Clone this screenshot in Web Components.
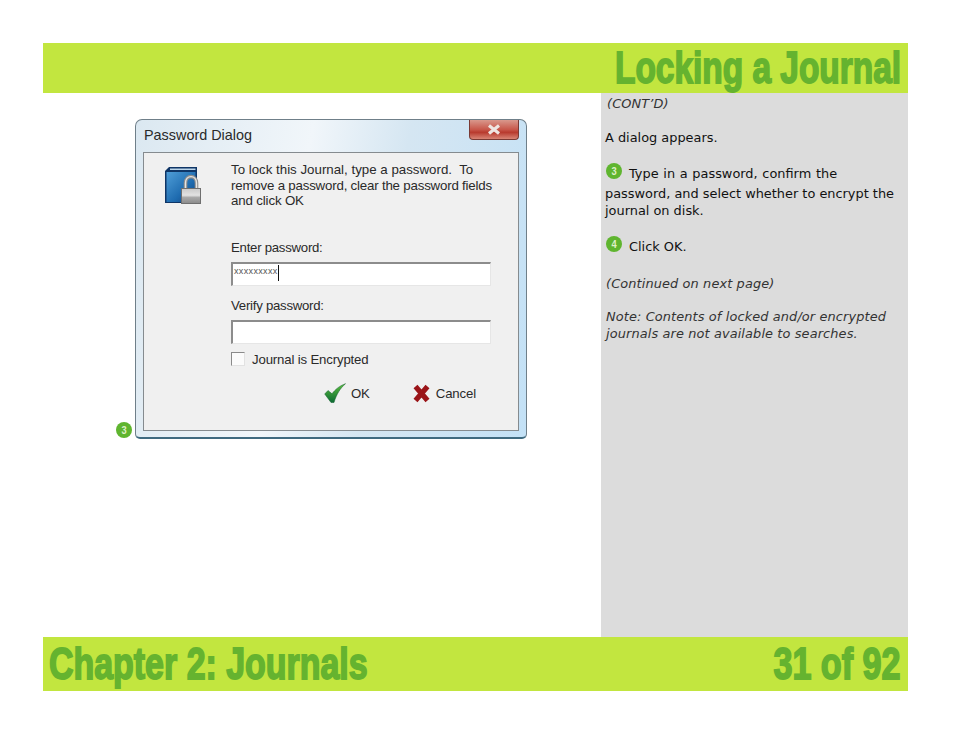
<!doctype html>
<html>
<head>
<meta charset="utf-8">
<title>Locking a Journal</title>
<style>
  html, body { margin: 0; background: #ffffff; }
</style>
</head>
<body>
<slide-page>
  <slide-band slot="header" height="50"><band-title side="end" squeeze="0.743">Locking a Journal</band-title></slide-band>
  <dialog-area slot="main">
    <step-badge num="3" class="callout"></step-badge>
    <password-dialog></password-dialog>
  </dialog-area>
  <side-notes slot="side">
    <p class="em first">(CONT’D)</p>
    <p class="intro">A dialog appears.</p>
    <p class="step3"><step-badge num="3"></step-badge><span style="word-spacing:0.6px">Type in a password, confirm the</span><br><span>password, and select whether to encrypt the journal on disk.</span></p>
    <p class="step4"><step-badge num="4"></step-badge><span>Click OK.</span></p>
    <p class="em cont">(Continued on next page)</p>
    <p class="em note">Note: Contents of locked and/or encrypted journals are not available to searches.</p>
  </side-notes>
  <slide-band slot="footer" height="54"><band-title side="start" squeeze="0.754">Chapter 2: Journals</band-title><band-title side="end" squeeze="0.759">31 of 92</band-title></slide-band>
</slide-page>

<script>
class SlidePage extends HTMLElement {
  constructor() {
    super();
    this.attachShadow( {mode: 'open'} );
    this.shadowRoot.innerHTML = `
      <style>
        :host { display: block; box-sizing: border-box; width: 954px; height: 738px; padding: 43px 46px 47px 43px; }
        .middle { display: grid; grid-template-columns: 558px 307px; height: 544px; }
      </style>
      <slot name="header"></slot>
      <div class="middle">
        <slot name="main"></slot>
        <slot name="side"></slot>
      </div>
      <slot name="footer"></slot>
    `;
  }
}

class SlideBand extends HTMLElement {
  constructor() {
    super();
    this.attachShadow( {mode: 'open'} );
    const h = this.getAttribute( 'height' );
    this.shadowRoot.innerHTML = `
      <style>
        :host {
          display: flex;
          box-sizing: border-box;
          height: ${h}px;
          align-items: center;
          justify-content: space-between;
          padding: 0 7px 0 6px;
          background: #c2e63f;
        }
      </style>
      <slot></slot>
    `;
  }
}

// Impact is not installed: bold Liberation squeezed and thickened instead
class BandTitle extends HTMLElement {
  constructor() {
    super();
    this.attachShadow( {mode: 'open'} );
    const side = this.getAttribute( 'side' );
    this.shadowRoot.innerHTML = `
      <style>
        :host {
          display: block;
          margin-left: ${side === 'end' ? 'auto' : '0'};
          transform: scaleX( ${this.getAttribute( 'squeeze' )} );
          transform-origin: ${side === 'end' ? 'right' : 'left'} center;
          color: #65b32f;
          font-family: "Liberation Sans", sans-serif;
          font-weight: 700;
          font-size: 45px;
          line-height: 50px;
          -webkit-text-stroke: 1.8px #65b32f;
          white-space: nowrap;
        }
      </style>
      <slot></slot>
    `;
  }
}

class DialogArea extends HTMLElement {
  constructor() {
    super();
    this.attachShadow( {mode: 'open'} );
    this.shadowRoot.innerHTML = `
      <style>
        :host { display: block; position: relative; padding: 26px 0 0 92px; }
        ::slotted( .callout ) { position: absolute; left: 72px; top: 329px; }
      </style>
      <slot></slot>
    `;
  }
}

class StepBadge extends HTMLElement {
  constructor() {
    super();
    this.attachShadow( {mode: 'open'} );
    this.shadowRoot.innerHTML = `
      <style>
        :host {
          display: inline-flex;
          width: 16px;
          height: 16px;
          border-radius: 50%;
          align-items: center;
          justify-content: center;
          background: #5fb52f;
          color: #dff0c8;
          font: 700 11px "Liberation Sans", sans-serif;
          vertical-align: 3px;
          margin: 0 7px 5.5px 1px;
        }
        span { display: inline-block; transform: scaleX( 0.85 ); }
      </style>
      <span></span>
    `;
    this.shadowRoot.querySelector( 'span' ).textContent = this.getAttribute( 'num' );
  }
}

class SideNotes extends HTMLElement {
  constructor() {
    super();
    this.attachShadow( {mode: 'open'} );
    this.shadowRoot.innerHTML = `
      <style>
        :host {
          display: block;
          box-sizing: border-box;
          padding: 2px 8px 0 4px;
          background: #dcdcdc;
          color: #111111;
          font-family: "DejaVu Sans", sans-serif;
          font-size: 12.9px;
          line-height: 17px;
        }
        ::slotted( p ) { margin: 0; }
        ::slotted( .em ) { font-style: italic; color: #333333; letter-spacing: 0.12px; }
        ::slotted( .first ) { padding-left: 2px; }
        ::slotted( .intro ) { margin-top: 17px; }
        ::slotted( .step3 ) { margin-top: 17px; }
        ::slotted( .step4 ) { margin-top: 17px; }
        ::slotted( .cont ) { margin-top: 18px; padding-left: 1px; }
        ::slotted( .note ) { margin-top: 16px; padding-left: 1px; }
      </style>
      <slot></slot>
    `;
  }
}

class PasswordDialog extends HTMLElement {
  constructor() {
    super();
    this.attachShadow( {mode: 'open'} );
    this.shadowRoot.innerHTML = `
      <style>
        :host {
          display: block;
          box-sizing: border-box;
          width: 392px;
          height: 320px;
          padding: 0 7px 6px;
          border: 1px solid #6f7f89;
          border-bottom: 2px solid #3f6a80;
          border-radius: 7px 7px 5px 5px;
          background: linear-gradient( 100deg, #dbe8f1 0%, #f1f6fa 40%, #d5e6f2 62%, #c3e1f6 100% );
          color: #2a2a2a;
          font-family: "Liberation Sans", sans-serif;
          font-size: 13.2px;
          letter-spacing: -0.15px;
        }
        .title { display: flex; justify-content: space-between; height: 32px; }
        .title span { padding: 7px 0 0 1px; font-size: 14.4px; letter-spacing: 0; }
        .close {
          display: flex;
          align-items: center;
          justify-content: center;
          width: 50px;
          height: 20px;
          box-sizing: border-box;
          border: 1px solid #7a3a34;
          border-top: 0;
          border-radius: 0 0 4px 4px;
          background: linear-gradient( #d9988c, #c8574a 50%, #b83a2e 65%, #d98575 );
        }
        .panel {
          box-sizing: border-box;
          height: 279px;
          padding: 9px 0 0 20px;
          border: 1.5px solid #858b8f;
          background: #f0f0f0;
          display: grid;
          grid-template-columns: 67px 260px;
          align-content: start;
        }
        .lock { padding-top: 4px; }
        .lead { margin: 0; font-size: 13.3px; line-height: 15.6px; white-space: nowrap; }
        .lead span { display: block; }
        .form { grid-column: 2; display: flex; flex-direction: column; }
        .label { line-height: 16px; letter-spacing: -0.25px; }
        .field {
          box-sizing: border-box;
          height: 24px;
          margin-top: 6px;
          padding: 1px 0 0 1px;
          background: #ffffff;
          border: 2px solid #8c8c8c;
          border-right: 1px solid #e6e6e6;
          border-bottom: 1px solid #e6e6e6;
          font-size: 9px;
          line-height: 12px;
          letter-spacing: 0.35px;
          color: #555555;
          display: flex;
        }
        .caret { width: 1px; height: 16px; background: #111111; }
        .check { display: flex; align-items: center; gap: 7px; margin-top: 7px; height: 16px; }
        .box { box-sizing: border-box; width: 14px; height: 14px; background: #fbfbfb; border: 1px solid #8a8a8a; border-right-color: #e2e2e2; border-bottom-color: #e2e2e2; }
        .actions { display: flex; margin-top: 15px; height: 22px; align-items: center; padding-left: 93px; }
        .btn { display: flex; align-items: center; gap: 5px; }
        .btn.cancel { margin-left: 43px; gap: 6px; }
      </style>
      <div class="title">
        <span>Password Dialog</span>
        <div class="close">
          <svg width="16" height="11" viewBox="0 0 16 11"><path d="M3 1.5 L13 9.5 M13 1.5 L3 9.5" fill="none" stroke="#eee6e2" stroke-width="3.2"/></svg>
        </div>
      </div>
      <div class="panel">
        <div class="lock">
          <svg width="38" height="40" viewBox="0 0 38 40">
            <defs>
              <linearGradient id="cover" x1="0" y1="0" x2="1" y2="1"><stop offset="0" stop-color="#4f9ed8"/><stop offset="0.6" stop-color="#1f6cb0"/><stop offset="1" stop-color="#123f7a"/></linearGradient>
              <linearGradient id="body" x1="0" y1="0" x2="0" y2="1"><stop offset="0" stop-color="#c9c9c9"/><stop offset="0.45" stop-color="#e2e2e2"/><stop offset="0.6" stop-color="#a9a9a9"/><stop offset="1" stop-color="#8a8a8a"/></linearGradient>
            </defs>
            <path d="M5 1 H33 V37 H1 V5 Z" fill="#0f3566"/>
            <path d="M6 2.5 H31.5 V4 H6 Z" fill="#bcd6ea"/>
            <path d="M2.5 6 H31.5 V36 H2.5 Z" fill="url(#cover)"/>
            <path d="M21.5 23 V17 C21.5 8.5 32.5 8.5 32.5 17 V23" fill="none" stroke="#8d8d8d" stroke-width="3.6"/>
            <path d="M21.5 23 V17 C21.5 8.5 32.5 8.5 32.5 17 V23" fill="none" stroke="#e4e4e4" stroke-width="1.4"/>
            <rect x="17.5" y="22.5" width="19" height="15" fill="url(#body)" stroke="#6f6f6f" stroke-width="1"/>
          </svg>
        </div>
        <p class="lead"><span style="letter-spacing:0">To lock this Journal, type a password.&nbsp; To</span><span style="letter-spacing:-0.2px">remove a password, clear the password fields</span><span>and click OK</span></p>
        <div class="form">
          <span class="label" style="margin-top:31px">Enter password:</span>
          <div class="field"><span>xxxxxxxxx</span><i class="caret"></i></div>
          <span class="label" style="margin-top:12px">Verify password:</span>
          <div class="field"></div>
          <div class="check"><i class="box"></i><span>Journal is Encrypted</span></div>
          <div class="actions">
            <div class="btn">
              <svg width="22" height="20" viewBox="0 0 22 20"><defs><linearGradient id="tick" x1="0" y1="0" x2="0" y2="1"><stop offset="0" stop-color="#5cc03c"/><stop offset="1" stop-color="#0d6a34"/></linearGradient></defs><path d="M0.7 11 L4 7.5 L8 10.8 C11 6.8 15 3 21.5 0.7 C16.5 5 12.5 11 10 19.5 H7 Z" fill="url(#tick)" stroke="#0f5f2a" stroke-width="0.5"/></svg>
              <span>OK</span>
            </div>
            <div class="btn cancel">
              <svg width="17" height="19" viewBox="0 0 17 19"><path d="M2.5 2.5 L14.5 16.5 M14.5 2.5 L2.5 16.5" fill="none" stroke="#9a1418" stroke-width="5.2"/></svg>
              <span>Cancel</span>
            </div>
          </div>
        </div>
      </div>
    `;
  }
}

customElements.define( 'slide-page', SlidePage );
customElements.define( 'slide-band', SlideBand );
customElements.define( 'band-title', BandTitle );
customElements.define( 'dialog-area', DialogArea );
customElements.define( 'step-badge', StepBadge );
customElements.define( 'side-notes', SideNotes );
customElements.define( 'password-dialog', PasswordDialog );
</script>
</body>
</html>
